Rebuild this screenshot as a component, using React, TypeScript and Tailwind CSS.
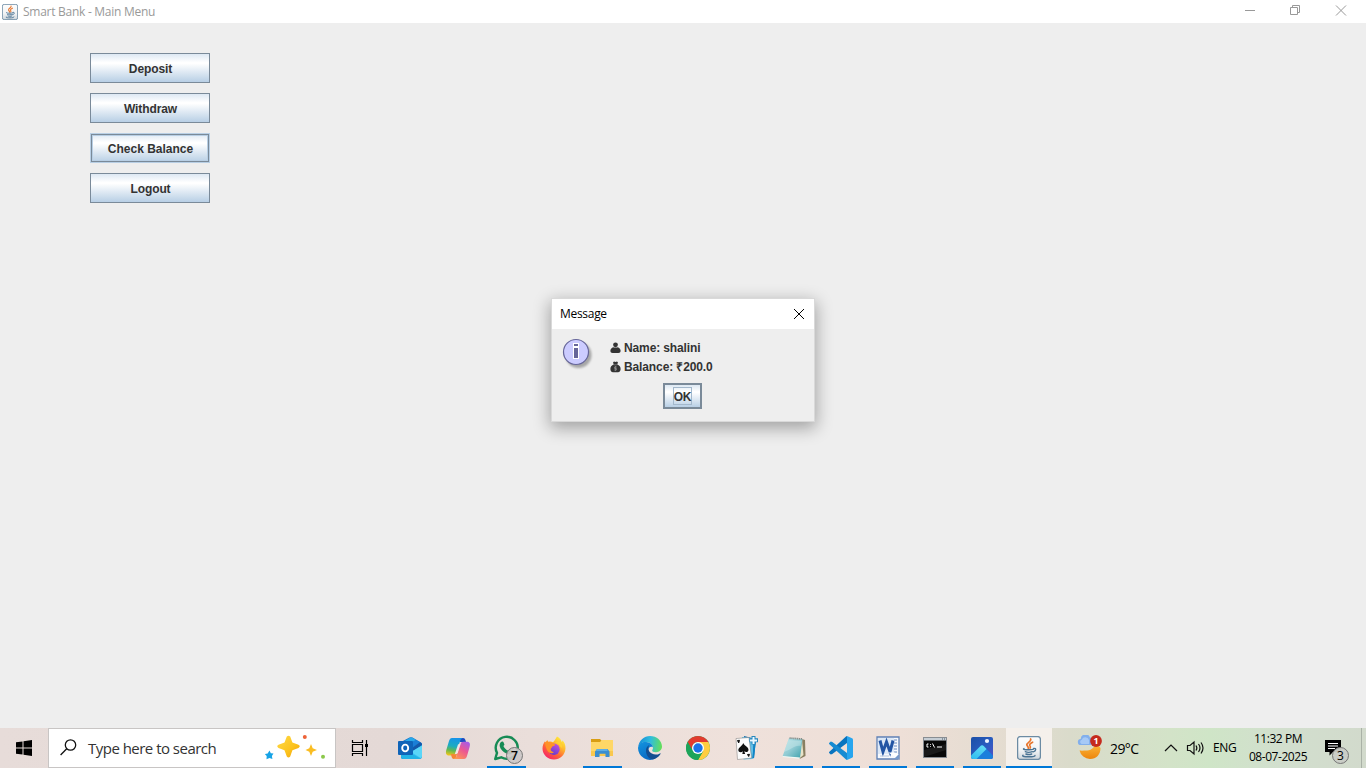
import React from "react";

const JavaIcon = ({ size }: { size: number }) => (
  <svg width={size} height={size} viewBox="0 0 24 24" fill="none">
    <defs>
      <linearGradient id="jv" x1="0" y1="0" x2="0" y2="1">
        <stop offset="0" stopColor="#fdfdfd" />
        <stop offset="0.6" stopColor="#f1f3f5" />
        <stop offset="1" stopColor="#cfd6dc" />
      </linearGradient>
    </defs>
    <rect x="0.6" y="0.6" width="22.8" height="22.8" rx="2.6" fill="url(#jv)" stroke="#6c8ba3" strokeWidth="1.3" />
    <path d="M13.6 3c1.4 2.3-4.3 3.6-3.7 6 .3 1.300 1.700 1.800 1.400 3.300M15.600 6.200c-1.600.8-3.400 1.700-2.900 3.100.4.9 1.200 1.300.4 2.800" stroke="#e8762d" strokeWidth="1.700" strokeLinecap="round" />
    <path d="M7 12.600c-1.800.9 1.500 1.300 5 1.200 2 0 3.600-.2 4.400-.6M8.300 15.700c1.800.8 5 .7 7 0M8.900 18c1.600.7 4 .6 5.800 0M16.700 12.500c2.800-.6 2.600 2.600-.5 3.400M6 19.300c-1.300 1 2 1.600 6 1.500 3.400 0 6-.5 6-1.300" stroke="#4a7393" strokeWidth="1.400" strokeLinecap="round" />
  </svg>
);

const SwingButton = ({ label, focused }: { label: string; focused?: boolean }) => (
  <button
    className={
      "flex h-[30px] w-[120px] items-center justify-center bg-[linear-gradient(180deg,#dde8f3_0%,#ffffff_30%,#ffffff_34%,#b8cfe5_100%)] pt-0.5 pl-px text-[12px] font-bold text-[#333] " +
      (focused
        ? "border border-[#b8cfe5] shadow-[inset_0_0_0_1px_#7a8a99,inset_0_0_0_2px_#b8cfe5]"
        : "border border-[#7a8a99] tracking-[-0.1px]")
    }
  >
    {label}
  </button>
);

const Outlook = () => (
  <svg width="24" height="22" viewBox="0 0 24 22">
    <path d="M3 5 11.500.6a3 3 0 0 1 3 0L23 5.500a2 2 0 0 1 1 1.700V19a3 3 0 0 1-3 3H5a2 2 0 0 1-2-2Z" fill="#1272c8" />
    <path d="M5 5 12 .8a3 3 0 0 1 2.500 0L18 3 8 9Z" fill="#28a8ea" />
    <path d="M12 6 18 3l4 2.300-10 7Z" fill="#1b7fd6" />
    <path d="M13 12 22 5.300c1.300.6 2 1.300 2 2.500l-10 7Z" fill="#1558a8" />
    <path d="M24 8.500V19a3 3 0 0 1-3 3H9l-4-2Z" fill="#33bdf0" />
    <path d="M13 15 24 8.500V19c0 1-.4 1.700-1 2.200Z" fill="#5bd6f8" />
    <path d="m3 17 10-.5L22.500 21.500A3 3 0 0 1 21 22H5a2 2 0 0 1-2-2Z" fill="#23b3e6" />
    <rect y="4" width="15" height="14" rx="1" fill="#0f64b8" />
    <ellipse cx="7.200" cy="11" rx="3" ry="3.400" fill="none" stroke="#fff" strokeWidth="1.900" />
  </svg>
);

const Copilot = () => (
  <svg width="26" height="24" viewBox="0 0 26 24">
    <defs>
      <linearGradient id="cp1" x1="0.4" y1="0" x2="0.2" y2="1">
        <stop stopColor="#1794e8" />
        <stop offset=".45" stopColor="#1eacc0" />
        <stop offset=".7" stopColor="#65b84f" />
        <stop offset="1" stopColor="#f6c619" />
      </linearGradient>
      <linearGradient id="cp2" x1="0.8" y1="0" x2="0.2" y2="1">
        <stop stopColor="#a75be8" />
        <stop offset=".45" stopColor="#eb5793" />
        <stop offset="1" stopColor="#ff9654" />
      </linearGradient>
    </defs>
    <path d="M15 2h3c2 0 2.500 2 3 4h-6Z" fill="#204ac0" />
    <path d="M7 2h11c-2 .5-2.600 2-3.200 4l-3 10c-.7 2.200-1.800 3.500-4 3.500H4C1 19.500.5 17 1.300 14L4 5c.7-2 1.500-3 3-3Z" fill="url(#cp1)" />
    <path d="M19 23H9c1.600-.6 2.200-2 2.800-4l3-10C15.500 7 16.700 5.800 18.500 5.800H22c3 0 3.400 2.400 2.600 5.200L22 20c-.6 2-1.500 3-3 3Z" fill="url(#cp2)" />
    <path d="M6 18h6l-1.400 4.200L9 23c-2 0-2.500-2-3-5Z" fill="#f48635" />
    <path d="m13 8.500 3-1.500-3.300 10-3 1.500Z" fill="#f4e4e4" />
  </svg>
);

const WhatsApp = () => (
  <svg width="26" height="26" viewBox="0 0 26 26" fill="none">
    <path d="M2.200 24 4 17.900A11 11 0 1 1 8.200 22.300Z" stroke="#178b55" strokeWidth="2.400" strokeLinejoin="round" />
    <path d="M9 6.600c.7-.3 1.200 0 1.400.5l1 2.300c.2.5-.7 1.300-1 1.700.9 2.200 2.600 3.800 4.900 4.700.6-.5 1.300-1.600 1.800-1.400l2.300 1.100c.6.3.4 1.400 0 2.200-1.200 1.800-3.700 1.800-6 .8-3.200-1.300-6-4.300-6.700-7.300C6.300 9 7.500 7 9 6.600Z" fill="#178b55" />
  </svg>
);

const Firefox = () => (
  <svg width="24" height="24" viewBox="0 0 24 24">
    <defs>
      <linearGradient id="ff" x1=".85" y1=".05" x2=".2" y2=".95">
        <stop stopColor="#fff23f" />
        <stop offset=".35" stopColor="#ffb42c" />
        <stop offset=".65" stopColor="#ff6538" />
        <stop offset="1" stopColor="#f52369" />
      </linearGradient>
      <linearGradient id="ffp" x1=".8" y1="0" x2=".2" y2="1">
        <stop stopColor="#c14fe0" />
        <stop offset="1" stopColor="#603ac8" />
      </linearGradient>
    </defs>
    <path d="M15 .5c2.500 1.200 4 3 4.800 5.400.6-.2.5-1 .3-1.700C22.500 6 23.600 9 23.500 12.500 23 19.200 18 23.500 12 23.500S.6 19 .5 12.800C.5 9.700 1.500 7 3 5.200L3.200 7 5.300 4l1 2c1.600-.6 3.400-.5 4.700.3C12.200 5.200 13.500 3 15 .5Z" fill="url(#ff)" />
    <circle cx="12" cy="13.200" r="5.700" fill="url(#ffp)" />
    <path d="M3 6c3-.6 5 .2 8 1.200l2.300 1.600c-.5 1.200-2.800 1.100-3.300 2.300-.4 1.100-1.300 1.300-1.300 2.500 0 1.600 2 2.500 3.400 2.300-2 2.200-5.200 1.400-6.500-.8C4.200 12.600 3 8.800 3 6Z" fill="#ff9227" />
    <path d="M13.500 7c2 0 4.600 1.500 5 4l1.700 1c.3-3-.6-5.500-3.200-7.500Z" fill="#ffcf34" />
  </svg>
);

const Folder = () => (
  <svg width="24" height="24" viewBox="0 0 24 24">
    <path d="M1 3h9l2 2-1 2H1Z" fill="#d99e13" />
    <path d="M1 6h9l2-2h11v16H1Z" fill="#ffd766" />
    <path d="M1 15h22v5H1Z" fill="#fac84e" />
    <path d="M5 21v-5.500L7 13h10.500l2 2.500V21h-4v-3.200h-6V21Z" fill="#3b8ed0" />
    <path d="M7 13h10.500v2H6Z" fill="#5daee5" />
  </svg>
);

const Edge = () => (
  <svg width="24" height="24" viewBox="0 0 24 24">
    <defs>
      <linearGradient id="eg1" x1="0" y1=".4" x2="1" y2=".5">
        <stop stopColor="#168bd8" />
        <stop offset=".5" stopColor="#30bddd" />
        <stop offset="1" stopColor="#65df58" />
      </linearGradient>
      <linearGradient id="eg2" x1="0" y1="0" x2=".5" y2="1">
        <stop stopColor="#1494df" />
        <stop offset="1" stopColor="#0869c3" />
      </linearGradient>
    </defs>
    <path d="M.3 10.500C1.200 4.500 6 0 12 0c6.800 0 12 4.800 12 10.600 0 3.300-2.700 5.600-6 5.600-2.700 0-4.100-1-3.800-2 .2-.8 1-1.200.7-2.800C14.500 8.500 12 6.200 8 6 4.500 6 1.500 8 .3 10.500Z" fill="url(#eg1)" />
    <path d="M0 12C.5 7.500 4 5.500 8.200 6c3.400.3 6.200 2 6.800 5.200-3-1.300-5.200 1-5 4.800.3 4.500 4 7 8 6.300A12 12 0 0 1 0 12Z" fill="url(#eg2)" />
    <path d="M8 14.500c0-2.400 1.200-4.300 3.300-5.400-2 3.400-.7 6.700 2.500 8.500 2.800 1.500 5.700 1.200 8.100-.2.600-.3.900.1.600.6-2 3.300-5 5.200-8.300 5.300C10 22.500 8 18.500 8 14.500Z" fill="#124e91" />
  </svg>
);

const Chrome = () => (
  <svg width="24" height="24" viewBox="0 0 24 24">
    <circle cx="12" cy="12" r="12" fill="#1da45a" />
    <path d="M12 6h10.390A12 12 0 0 1 12 24l5.200-9Z" fill="#ffcd40" />
    <path d="M22.390 6H12a6 6 0 0 0-5.200 9L1.610 6A12 12 0 0 1 22.390 6Z" fill="#e23b2e" />
    <path d="M1.610 6 6.800 15A6 6 0 0 0 17.200 15L12 24A12 12 0 0 1 1.610 6Z" fill="#1da45a" />
    <circle cx="12" cy="12" r="6" fill="#fff" />
    <circle cx="12" cy="12" r="4.700" fill="#1a73e8" />
  </svg>
);

const Solitaire = () => (
  <svg width="26" height="26" viewBox="0 0 26 26">
    <path d="m11 1 12 3-2 19-10 1Z" fill="#116dac" />
    <path d="m9 2 12 1.500L19.500 24l-9 .5Z" fill="#62bfe7" />
    <path d="m21 5 2-.5-2 18.500-1.500.5Z" fill="#0e86c8" />
    <path d="m3 3.500 13-1L18.500 23l-14 1.500Z" fill="#fcfcfc" stroke="#777" strokeWidth=".5" />
    <path d="M10.200 8c.8 2.300 5.300 4 5.300 6.700 0 2.600-2.900 2.900-4.300 1.500l1 2.800H9.300l.6-2.700c-1.300 1.700-4.600 1.400-4.600-1.200C5.300 12.700 9.500 10.800 10.200 8Z" fill="#111" />
    <path d="m4.500 5.500 2-.2-.8 2.700Zm10 14 2-.2-.8 2.200Z" fill="#111" stroke="#111" />
    <path d="M20.500 1v8.500M16.500 5.300h8.500" stroke="#2787bd" strokeWidth="4" />
    <path d="M20.500 2v7M17 5.500h7" stroke="#e9f8ff" strokeWidth="2" />
  </svg>
);

const Notepad = () => (
  <svg width="26" height="24" viewBox="0 0 26 24">
    <defs>
      <linearGradient id="np" x1="0" y1="0" x2="1" y2="1">
        <stop stopColor="#b4e2e7" />
        <stop offset=".5" stopColor="#91cbd3" />
        <stop offset="1" stopColor="#3ca1ac" />
      </linearGradient>
    </defs>
    <path d="m21 3 3 1 .5 16-6 3Z" fill="#897f62" />
    <path d="m21 4 1.500 15-4.300 3.500Z" fill="#e8e3c8" />
    <path d="M8 2 21.500 3 19 22 1.500 20.500Z" fill="url(#np)" />
    <path d="m1.500 20 17.500 1.500-.5 1.300L1.500 21Z" fill="#eff8f4" />
    <path d="m8.500 2 13 1" stroke="#888d89" strokeWidth="1.700" strokeDasharray="1.200 .7" />
    <path d="m7.500 4 13 1-1 5C13 9 10 14 3 16Z" fill="#d8f0f1" opacity=".4" />
  </svg>
);

const VSCode = () => (
  <svg width="24" height="24" viewBox="0 0 24 24">
    <path d="m18 0 5 2.300c.6.300 1 .8 1 1.500v16.400c0 .7-.4 1.200-1 1.500L18 24Z" fill="#27a5ee" />
    <path d="M18 0v7L3.300 18 1.800 18.500.4 17.200c-.6-.5-.5-1 0-1.500L17 .5Z" fill="#0874bf" />
    <path d="M18 24v-7L3.300 6 1.800 5.500.4 6.800c-.6.500-.5 1 0 1.500L17 23.500Z" fill="#168bd2" />
  </svg>
);

const Word = () => (
  <svg width="24" height="24" viewBox="0 0 24 24">
    <path d="M1 1h22v22H1Z" fill="#f7f9fd" stroke="#5f80b5" strokeWidth="1.300" />
    <path d="M2 2h16v16H2Z" fill="#dce8f7" />
    <path d="M18 4h3M18 7h3M18 10h3M18 13h3M18 16h3" stroke="#6a8cc0" />
    <path d="m4 4.500 3 11.300L10.500 6 14 15.800 17 4.500" fill="none" stroke="#2355a4" strokeWidth="3" />
    <path d="M12 16.500h6l5 2v5L17 19.500Z" fill="#fff" />
    <path d="M18 23h5v-5Z" fill="#7799ca" />
    <path d="M4 20h9" stroke="#b7c7df" />
  </svg>
);

const Terminal = () => (
  <svg width="24" height="22" viewBox="0 0 24 22">
    <rect x=".5" y=".5" width="23" height="20" fill="#080808" stroke="#888d92" />
    <path d="M1 1h22v2.500H1Z" fill="#c5cdd4" />
    <path d="M19 2h1m1 0h1" stroke="#475665" />
    <path d="M5.500 7H4v3h1.500M7.500 7v.8m0 1.500v.7M9.500 6.500l2 4M14 10h5" stroke="#fff" fill="none" />
    <path d="M1 13 23 7v6L1 20Z" fill="#fff" opacity=".07" />
  </svg>
);

const Photos = () => (
  <svg width="22" height="22" viewBox="0 0 22 22">
    <defs>
      <linearGradient id="ph" x1="0" y1="0" x2="1" y2="1">
        <stop stopColor="#1a4fa6" />
        <stop offset=".55" stopColor="#2a5cc0" />
        <stop offset="1" stopColor="#5350c8" />
      </linearGradient>
      <linearGradient id="ph2" x1="0" y1="1" x2=".5" y2="0">
        <stop stopColor="#22b4ee" />
        <stop offset="1" stopColor="#5cd8f4" />
      </linearGradient>
      <clipPath id="phc"><rect width="22" height="22" rx="2" /></clipPath>
    </defs>
    <g clipPath="url(#phc)">
      <path d="M0 0h22v22H0Z" fill="url(#ph)" />
      <path d="M9.500 9c1-1 2.200-1 3.200 0L24 20.500V24H2Z" fill="#1b7fdc" />
      <path d="M-2 20.500 9.500 9c1-1 2.200-1 3.200 0l2.800 3L3 24.500h-6Z" fill="url(#ph2)" />
      <circle cx="16" cy="4" r="2.100" fill="#eff5ff" />
    </g>
  </svg>
);

const Sparkles = () => (
  <svg width="62" height="28" viewBox="0 0 62 28">
    <defs>
      <linearGradient id="sp" x1="0" y1="0" x2="1" y2="1">
        <stop stopColor="#ffda48" />
        <stop offset=".6" stopColor="#fcc31d" />
        <stop offset="1" stopColor="#ef9d0a" />
      </linearGradient>
    </defs>
    <path d="M21.800 2.500Q23.500.8 25.200 2.500L27.400 8.500 33.500 10.800Q36 12.300 33.500 13.900L27.400 16.200 25.200 22.500Q23.500 24.500 21.800 22.500L19.500 16.200 13.500 13.900Q11 12.300 13.500 10.800L19.500 8.500Z" fill="url(#sp)" />
    <path d="m46 10 1.700 4.200 4.300 1.800-4.300 1.700L46 22l-1.700-4.300L40.500 16l3.800-1.800Z" fill="#fabd22" />
    <path d="m4.500 16.500 1.300 2.700 2.700.4-1.600 2.400.5 2.900-2.900-1-3 1.300.2-3.200-2-2 3-.5Z" fill="#17a3e6" />
    <circle cx="39.800" cy="3" r="2" fill="#ed6338" />
    <circle cx="58" cy="22.700" r="2" fill="#8bc84a" />
  </svg>
);

const Weather = () => (
  <svg width="26" height="26" viewBox="0 0 26 26">
    <defs>
      <linearGradient id="mn" x1="0" y1="0" x2="0" y2="1">
        <stop stopColor="#ffc247" />
        <stop offset="1" stopColor="#ed850b" />
      </linearGradient>
    </defs>
    <path d="M18 6c1 5-3 9.500-8 9.500-3 0-5 .3-7.500 0A11 11 0 0 0 13 24c6.500 0 10.500-4.500 10.500-11Z" fill="url(#mn)" />
    <path d="M4 10a3 3 0 0 1-.3-6A4.800 4.800 0 0 1 13 2.500a3.800 3.800 0 0 1 .5 7.500Z" fill="#82afec" />
    <path d="M4.500 9a2.300 2.300 0 0 1 .3-4.300 3.800 3.800 0 0 1 7.200.3V9Z" fill="#a6c9f6" />
    <circle cx="19" cy="6" r="5.900" fill="#c52a1d" />
  </svg>
);

const apps: { name: string; icon: React.ReactNode; cell: string; bar: string; badge?: string }[] = [
  { name: "Outlook", icon: <Outlook />, cell: "w-12", bar: "" },
  { name: "Copilot", icon: <Copilot />, cell: "w-12", bar: "" },
  { name: "WhatsApp", icon: <WhatsApp />, cell: "w-12", bar: "w-[39px] bg-[#0078d7]", badge: "7" },
  { name: "Firefox", icon: <Firefox />, cell: "w-12", bar: "" },
  { name: "Explorer", icon: <Folder />, cell: "w-12", bar: "w-[39px] bg-[#0078d7]" },
  { name: "Edge", icon: <Edge />, cell: "w-12", bar: "" },
  { name: "Chrome", icon: <Chrome />, cell: "w-12", bar: "" },
  { name: "Solitaire", icon: <Solitaire />, cell: "w-12", bar: "" },
  { name: "Notepad", icon: <Notepad />, cell: "w-[47px] pl-px", bar: "w-[38px] bg-[#0078d7]" },
  { name: "Code", icon: <VSCode />, cell: "w-[47px] pl-px", bar: "w-[38px] bg-[#0078d7]" },
  { name: "Word", icon: <Word />, cell: "w-[47px] pl-px", bar: "w-[38px] bg-[#0078d7]" },
  { name: "Terminal", icon: <Terminal />, cell: "w-[47px] pl-px", bar: "w-[38px] bg-[#0078d7]" },
  { name: "Photos", icon: <Photos />, cell: "w-[47px] pl-px", bar: "w-[38px] bg-[#0078d7]" },
];

const ui = "font-['Open_Sans','Noto_Sans',sans-serif]";

export default function App() {
  return (
    <div className="relative flex h-[768px] w-[1366px] flex-col overflow-hidden bg-[#eee] font-['Liberation_Sans',Arial,sans-serif]">
      <header className={"flex h-[23px] shrink-0 items-center bg-white pl-0.5 " + ui}>
        <JavaIcon size={16} />
        <span className="ml-[5px] text-[12px] tracking-[-0.27px] text-[#999]">Smart Bank - Main Menu</span>
        <svg className="ml-auto" width="122" height="23" viewBox="0 0 122 23" fill="none" stroke="#999">
          <path d="M1 10.500h10M46.500 7.500h7v7h-7zM48.500 7V5.500h7v7H54M92 5.500l10 10M102 5.500l-10 10" />
        </svg>
      </header>

      <main className="flex flex-1 flex-col gap-2.5 pt-[30px] pl-[90px]">
        <SwingButton label="Deposit" />
        <SwingButton label="Withdraw" />
        <SwingButton label="Check Balance" focused />
        <SwingButton label="Logout" />
      </main>

      <section className="absolute top-[298px] left-[551px] flex h-[124px] w-[264px] flex-col border border-[#d9d9d9] bg-[#eee] shadow-[0_5px_16px_1px_rgba(0,0,0,0.33)]">
        <div className={"flex h-[30px] shrink-0 items-center justify-between bg-white pr-[9px] pb-px pl-2 " + ui}>
          <span className="pt-px text-[12px] tracking-[-0.3px] text-black">Message</span>
          <svg width="12" height="12" viewBox="0 0 12 12" stroke="#000">
            <path d="m1 1 10 10M11 1 1 11" />
          </svg>
        </div>
        <div className="flex pt-[8px] pl-[9px]">
          <svg className="shrink-0" width="34" height="34" viewBox="0 0 34 34">
            <defs>
              <filter id="sh"><feGaussianBlur stdDeviation="1.300" /></filter>
            </defs>
            <circle cx="17.500" cy="18" r="13" fill="#777" opacity=".6" filter="url(#sh)" />
            <circle cx="15" cy="15" r="12.500" fill="#ccf" stroke="#669" strokeWidth="1.200" />
            <path d="M12 6h6v4h-6zM12 10h6v12h-6z" fill="#fff" />
            <path d="M13 7h4v2h-4zM13 11h4v10h-4z" fill="#669" />
          </svg>
          <div className="ml-[15px] flex flex-col text-[12px] font-bold tracking-[-0.12px] text-[#333]">
            <div className="flex h-[19px] items-center gap-[3px] pt-[3px]">
              <svg className="-mt-px" width="11" height="12" viewBox="0 0 11 12" fill="#333">
                <circle cx="5.500" cy="2.800" r="2.400" />
                <path d="M3 5.200q2.500.8 5 0c1.600.7 2.600 2 2.600 3.600 0 1.400-.8 2.200-2.200 2.200H2.600C1.200 11 .4 10.200.4 8.800.4 7.200 1.400 5.900 3 5.200Z" />
              </svg>
              <span>Name: shalini</span>
            </div>
            <div className="flex h-[19px] items-center gap-[3px] pt-[3px]">
              <svg width="11" height="12" viewBox="0 0 11 12" fill="#333">
                <path d="M3 1.500 4 .5l1.500.4L7 .5l1 1-.8 2.100C9.500 4.300 10.700 6.200 10.600 8c0 1.700-.9 3.200-2.600 3.200H3C1.300 11.200.4 9.700.4 8 .3 6.200 1.500 4.300 3.800 3.600Z" />
                <path d="M7 6H4.500v1.500h2V9H4M5.500 5v5M3.800 3.800h3.400" stroke="#aaa" strokeWidth=".5" fill="none" />
              </svg>
              <span>Balance: ₹200.0</span>
            </div>
          </div>
        </div>
        <button className="absolute top-[84px] left-[111px] flex h-[26px] w-[39px] items-center justify-center border-2 border-[#7a8a99] bg-[linear-gradient(180deg,#dde8f3_0%,#ffffff_30%,#ffffff_34%,#b8cfe5_100%)]">
          <span className="flex h-[18px] w-[19px] items-center justify-center border border-[#a3b8cc] pt-px text-[12px] font-bold tracking-[-0.3px] text-[#333]">OK</span>
        </button>
      </section>

      <footer className={"flex h-10 shrink-0 bg-[linear-gradient(90deg,#e7dcd9_0px,#e4d9d6_390px,#eadeda_530px,#efe1db_740px,#eedfd7_900px,#e3dcd0_1010px,#dadbcb_1070px,#d3e3c8_1170px,#cfe5c7_1210px,#d2dfce_1280px,#d2dacc_1366px)] text-black *:shrink-0 " + ui}>
        <div className="flex w-12 items-center justify-center">
          <svg width="16" height="16" viewBox="0 0 16 16">
            <path d="m0 2.300 6.500-.9v6.100H0ZM7.500 1.200 16 0v7.500H7.500ZM0 8.500h6.500v6.100L0 13.700ZM7.500 8.500H16V16l-8.500-1.200Z" />
          </svg>
        </div>
        <div className="flex w-72 items-center border border-[#c8c5c4] bg-white pl-[11px]">
          <svg className="-mt-px" width="17" height="17" viewBox="0 0 17 17" fill="none" stroke="#111" strokeWidth="1.300">
            <circle cx="10.500" cy="6" r="5.200" />
            <path d="M6.700 9.800.6 16" />
          </svg>
          <span className="ml-[11px] text-[15px] tracking-[-0.52px] text-[#333]">Type here to search</span>
          <span className="mr-[8px] ml-auto"><Sparkles /></span>
        </div>
        <div className="mr-0.5 flex w-12 items-center justify-center">
          <svg width="18" height="16" viewBox="0 0 18 16" fill="none" stroke="#000" strokeWidth="1.200">
            <path d="M1.500 0v2.500h10V0M1.500 16v-2.500h10V16M1.500 4.500h10v7h-10zM15.500 0v16" />
            <path d="M14 4h3v3h-3z" fill="#000" stroke="none" />
          </svg>
        </div>
        {apps.map((app) => (
          <div key={app.name} className={"relative flex flex-col items-center " + app.cell}>
            <div className="flex h-[38px] items-center justify-center pt-[2px]">{app.icon}</div>
            <div className={"h-0.5 " + app.bar} />
            {app.badge && (
              <span className="absolute top-[19px] left-[24px] flex size-[17px] items-center justify-center rounded-full border border-[#777] bg-[#ccc8c6]/90 text-[12px] font-semibold">
                {app.badge}
              </span>
            )}
          </div>
        ))}
        <div className="ml-px flex w-[46px] flex-col items-center bg-[#f5f0eb]">
          <div className="flex h-[38px] items-center pt-[2px]"><JavaIcon size={24} /></div>
          <div className="h-0.5 w-full bg-[#0078d7]" />
        </div>
        <div className="relative ml-[25px] flex items-center">
          <Weather />
          <span className="absolute top-[7px] left-[13px] flex size-3 items-center justify-center text-[9px] font-bold text-white">1</span>
          <span className="ml-[7px] w-[30px] text-[14px] tracking-[-0.6px] whitespace-nowrap">29°C</span>
        </div>
        <svg className="mt-[12px] ml-[24px]" width="42" height="16" viewBox="0 0 42 16" fill="none" stroke="#111" strokeWidth="1.200">
          <path d="m1 11 6-6 6 6M23.500 5.500H26l4-3.500v12l-4-3.500h-2.500zM32 5.500q1.700 2.500 0 5M34.500 4q3 4 0 8M37 2.500q4 5.500 0 11" />
        </svg>
        <span className="ml-[7px] flex w-[32px] items-center text-[12px] tracking-[-0.4px]">ENG</span>
        <div className="flex w-[66px] flex-col items-center pt-[2px] text-[12px] leading-[18px] tracking-[-0.45px] whitespace-nowrap">
          <span>11:32 PM</span>
          <span>08-07-2025</span>
        </div>
        <div className="relative ml-[8px] flex w-9 items-center pl-[6px]">
          <svg width="16" height="16" viewBox="0 0 16 16">
            <path d="M0 0h16v12H8l-3.500 3.500V12H0Z" />
            <path d="M3 3.500h10M3 6h10M3 8.500h7" stroke="#fff" />
          </svg>
          <span className="absolute top-[19px] left-[13px] flex size-[17px] items-center justify-center rounded-full border border-[#777] bg-[#c9ccc5]/95 text-[12px]">3</span>
        </div>
        <div className="mr-1 ml-auto border-l border-[#aab2a7]" />
      </footer>
    </div>
  );
}
